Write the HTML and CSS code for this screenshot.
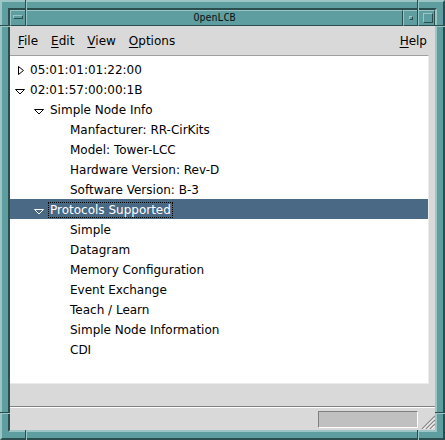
FILE: index.html
```html
<!DOCTYPE html>
<html>
<head>
<meta charset="utf-8">
<title>OpenLCB</title>
<link rel="stylesheet" href="styles.css">
</head>
<body>
<div class="frame">
  <div class="frame-inner">
    <div class="titlebar">
      <div class="tb-btn tb-menu"><span class="glyph-bar"></span></div>
      <div class="tb-btn tb-title">OpenLCB</div>
      <div class="tb-btn tb-min"><span class="glyph-min"></span></div>
      <div class="tb-btn tb-max"><span class="glyph-max"></span></div>
    </div>
    <div class="client">
      <div class="menubar">
        <span class="menu-item"><u>F</u>ile</span>
        <span class="menu-item"><u>E</u>dit</span>
        <span class="menu-item"><u>V</u>iew</span>
        <span class="menu-item"><u>O</u>ptions</span>
        <span class="menu-item menu-help"><u>H</u>elp</span>
      </div>
      <div class="tree">
        <div class="row lvl0"><span class="ind"><svg width="20" height="20" viewBox="0 0 20 20"><polygon class="tri" points="8.5,7.5 8.5,15.5 13.5,11.5"/></svg></span><span class="label">05:01:01:01:22:00</span></div>
        <div class="row lvl0"><span class="ind"><svg width="20" height="20" viewBox="0 0 20 20"><polygon class="tri" points="5.5,10.5 14.5,10.5 10,15"/></svg></span><span class="label">02:01:57:00:00:1B</span></div>
        <div class="row lvl1"><span class="ind"><svg width="20" height="20" viewBox="0 0 20 20"><polygon class="tri" points="4.5,10.5 13.5,10.5 9,15"/></svg></span><span class="label">Simple Node Info</span></div>
        <div class="row lvl2"><span class="ind"></span><span class="label">Manfacturer: RR-CirKits</span></div>
        <div class="row lvl2"><span class="ind"></span><span class="label">Model: Tower-LCC</span></div>
        <div class="row lvl2"><span class="ind"></span><span class="label">Hardware Version: Rev-D</span></div>
        <div class="row lvl2"><span class="ind"></span><span class="label">Software Version: B-3</span></div>
        <div class="row lvl1 selected"><span class="ind"><svg width="20" height="20" viewBox="0 0 20 20"><polygon class="tri" points="4.5,10.5 13.5,10.5 9,15"/></svg></span><span class="label focus">Protocols Supported</span></div>
        <div class="row lvl2"><span class="ind"></span><span class="label">Simple</span></div>
        <div class="row lvl2"><span class="ind"></span><span class="label">Datagram</span></div>
        <div class="row lvl2"><span class="ind"></span><span class="label">Memory Configuration</span></div>
        <div class="row lvl2"><span class="ind"></span><span class="label">Event Exchange</span></div>
        <div class="row lvl2"><span class="ind"></span><span class="label">Teach / Learn</span></div>
        <div class="row lvl2"><span class="ind"></span><span class="label">Simple Node Information</span></div>
        <div class="row lvl2"><span class="ind"></span><span class="label">CDI</span></div>
      </div>
      <div class="spacer"></div>
      <div class="statusbar">
        <div class="status-box"></div>
        <div class="grip">
          <svg width="15" height="15" viewBox="0 0 15 15">
            <line class="g-dark" x1="2" y1="15" x2="15" y2="2"/>
            <line class="g-light" x1="3.5" y1="15" x2="15" y2="3.5"/>
            <line class="g-dark" x1="6" y1="15" x2="15" y2="6"/>
            <line class="g-light" x1="7.5" y1="15" x2="15" y2="7.5"/>
            <line class="g-dark" x1="10" y1="15" x2="15" y2="10"/>
            <line class="g-light" x1="11.5" y1="15" x2="15" y2="11.5"/>
          </svg>
        </div>
      </div>
    </div>
  </div>
  <span class="sep-v sep-tl"></span>
  <span class="sep-v sep-tr"></span>
  <span class="sep-v sep-bl"></span>
  <span class="sep-v sep-br"></span>
  <span class="sep-h sep-lt"></span>
  <span class="sep-h sep-rt"></span>
  <span class="sep-h sep-lb"></span>
  <span class="sep-h sep-rb"></span>
</div>
</body>
</html>
```

FILE: styles.css
```css
* { box-sizing: border-box; }

html, body {
  margin: 0;
  padding: 0;
  background: #5f9ea0;
}

.frame {
  position: relative;
  width: 445px;
  height: 440px;
  background: #5f9ea0;
  border-style: solid;
  border-width: 2px;
  border-color: #9cc5c6 #2c4d4e #2c4d4e #9cc5c6;
  padding: 6px;
}

.frame-inner {
  width: 429px;
  height: 424px;
  border-style: solid;
  border-width: 2px;
  border-color: #2c4d4e #9cc5c6 #9cc5c6 #2c4d4e;
  display: flex;
  flex-direction: column;
}

/* title bar */
.titlebar {
  display: flex;
  height: 16px;
  flex: none;
}

.tb-btn {
  border-style: solid;
  border-width: 1px;
  border-color: #9cc5c6 #2c4d4e #2c4d4e #9cc5c6;
  background: #5f9ea0;
  position: relative;
}

.tb-menu { width: 16px; }
.tb-title {
  flex: 1;
  font-family: "DejaVu Sans Mono", monospace;
  font-size: 10px;
  line-height: 14px;
  text-align: center;
  color: #0a1414;
}
.tb-min { width: 15px; }
.tb-max { width: 17px; }

.glyph-bar {
  display: block;
  margin: 4px 0 0 2px;
  width: 10px;
  height: 4px;
  border-style: solid;
  border-width: 1px;
  border-color: #9cc5c6 #2c4d4e #2c4d4e #9cc5c6;
}

.glyph-min {
  display: block;
  margin: 5px 0 0 5px;
  width: 4px;
  height: 4px;
  border-style: solid;
  border-width: 1px;
  border-color: #9cc5c6 #2c4d4e #2c4d4e #9cc5c6;
}

.glyph-max {
  display: block;
  margin: 2px 0 0 4px;
  width: 10px;
  height: 10px;
  border-style: solid;
  border-width: 1px;
  border-color: #9cc5c6 #2c4d4e #2c4d4e #9cc5c6;
}

/* client */
.client {
  flex: 1;
  background: #d9d9d9;
  display: flex;
  flex-direction: column;
  font-family: "DejaVu Sans", sans-serif;
  font-size: 12px;
  color: #000;
}

.menubar {
  height: 29px;
  flex: none;
  display: flex;
  align-items: center;
  gap: 13px;
  padding: 1px 8px 0 8px;
  line-height: 16px;
}

.menu-item u {
  text-underline-offset: 2px;
}

.menu-help { margin-left: auto; }

.tree {
  height: 329px;
  flex: none;
  width: 419px;
  background: #fff;
  border-top: 1px solid #9e9e9e;
  border-right: 1px solid #ebebeb;
  border-bottom: 1px solid #ebebeb;
  padding-top: 3px;
}

.row {
  height: 20px;
  display: flex;
  align-items: flex-start;
  white-space: nowrap;
}

.lvl1 { padding-left: 20px; }
.lvl2 { padding-left: 40px; }

.ind {
  width: 20px;
  height: 20px;
  flex: none;
}

.ind svg { display: block; }

.tri {
  fill: none;
  stroke: #000;
  stroke-width: 1;
}

.label {
  line-height: 17px;
  padding-top: 3px;
}

.selected {
  background: #4a6984;
  color: #fff;
}

.selected .tri { stroke: #fff; }

.focus {
  line-height: 13px;
  margin-top: 4px;
  padding: 1px 1px 0 1px;
  margin-left: -1px;
  outline: 1px dotted #000;
  outline-offset: 0;
}

.spacer {
  height: 22px;
  flex: none;
}

.statusbar {
  flex: 1;
  border-top: 1px solid #828282;
  box-shadow: inset 0 1px 0 #ffffff;
  display: flex;
  justify-content: flex-end;
  align-items: flex-end;
}

.status-box {
  width: 100px;
  height: 17px;
  margin-bottom: 2px;
  margin-right: 2px;
  background: #c0c0c0;
  border-style: solid;
  border-width: 1px;
  border-color: #808080 #ffffff #ffffff #808080;
}

.grip {
  width: 15px;
  height: 15px;
  margin-bottom: 1px;
}

.grip svg { display: block; }

.g-dark { stroke: #8a8a8a; stroke-width: 1.3; }
.g-light { stroke: #ffffff; stroke-width: 1; }

/* frame corner grooves */
.sep-v, .sep-h {
  position: absolute;
  display: block;
}

.sep-v {
  width: 2px;
  height: 10px;
  border-left: 1px solid #2c4d4e;
  border-right: 1px solid #9cc5c6;
}

.sep-h {
  width: 10px;
  height: 2px;
  border-top: 1px solid #2c4d4e;
  border-bottom: 1px solid #9cc5c6;
}

.sep-tl { left: 23px; top: -2px; height: 12px; }
.sep-tr { left: 415px; top: -2px; height: 12px; }
.sep-bl { left: 23px; top: 428px; }
.sep-br { left: 415px; top: 428px; }
.sep-lt { left: -2px; top: 23px; }
.sep-rt { left: 433px; top: 23px; }
.sep-lb { left: -2px; top: 410px; }
.sep-rb { left: 433px; top: 410px; }
```
